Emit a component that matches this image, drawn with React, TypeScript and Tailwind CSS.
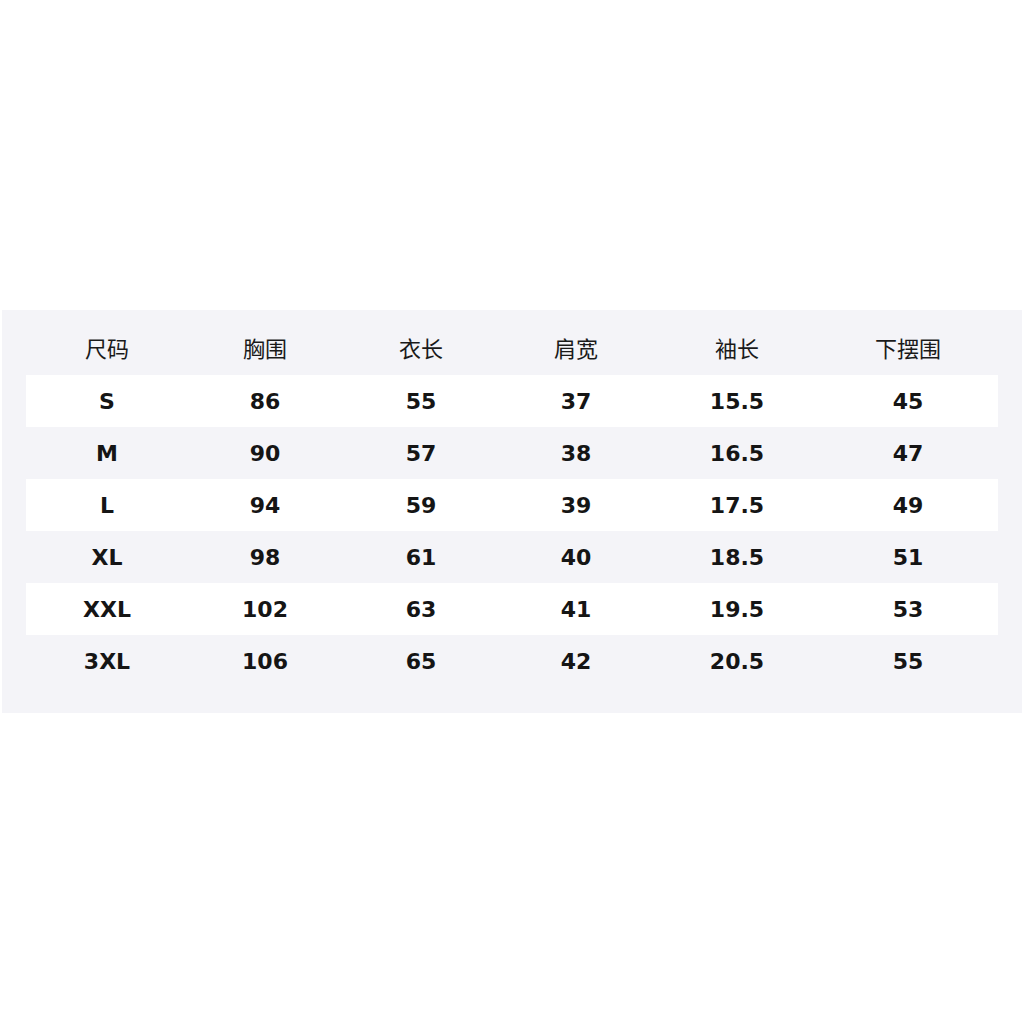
import React from "react";

const headers = ["尺码", "胸围", "衣长", "肩宽", "袖长", "下摆围"];
const rows = [
  ["S", "86", "55", "37", "15.5", "45"],
  ["M", "90", "57", "38", "16.5", "47"],
  ["L", "94", "59", "39", "17.5", "49"],
  ["XL", "98", "61", "40", "18.5", "51"],
  ["XXL", "102", "63", "41", "19.5", "53"],
  ["3XL", "106", "65", "42", "20.5", "55"],
];

const grid = "grid grid-cols-[162px_154px_158px_152px_170px_172px]";

export default function App() {
  return (
    <div className="w-[1024px] h-[1024px] bg-white pt-[310px] px-[2px]">
      <div className="bg-[#f4f4f8] pt-[13px] pb-[26px] px-[24px] w-[1020px]">
        <div className={`${grid} h-[52px] pb-[4px] items-center text-[22px] text-[#1a1a1a] font-['Noto_Sans_CJK_SC',sans-serif]`}>
          {headers.map((h) => (
            <div key={h} className="text-center leading-none">
              {h}
            </div>
          ))}
        </div>
        {rows.map((r, i) => (
          <div
            key={r[0]}
            className={`${grid} h-[52px] pt-[2px] items-center text-[22px] font-bold text-[#151515] font-['DejaVu_Sans',sans-serif] ${
              i % 2 === 0 ? "bg-white" : ""
            }`}
          >
            {r.map((c, j) => (
              <div key={j} className="text-center leading-none">
                {c}
              </div>
            ))}
          </div>
        ))}
      </div>
    </div>
  );
}
